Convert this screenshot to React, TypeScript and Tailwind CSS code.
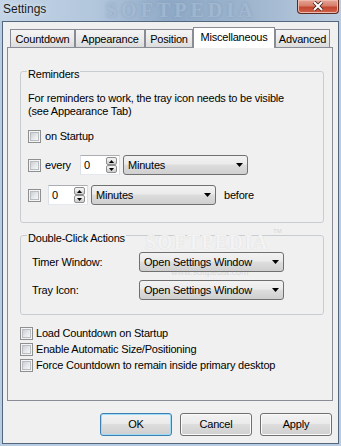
import type { ReactNode } from "react";

const raised =
  "bg-[linear-gradient(to_bottom,#f2f2f2_0%,#ebebeb_45%,#dddddd_50%,#cfcfcf_100%)]";

const Checkbox = () => (
  <span className="flex h-[13px] w-[13px] shrink-0 items-center justify-center border border-[#8e8f8f] bg-[#f4f4f4]">
    <span className="h-[9px] w-[9px] border border-[#b9bdc2] bg-[linear-gradient(135deg,#cbcfd4_0%,#e6e8ea_55%,#f7f7f7_100%)]" />
  </span>
);

const DropArrow = () => (
  <svg width="7" height="4" viewBox="0 0 7 4">
    <path d="M0 0h7L3.5 4z" fill="#000" />
  </svg>
);

const Dropdown = ({ value, className }: { value: string; className: string }) => (
  <div
    className={`flex h-[20px] shrink-0 items-center justify-between rounded-[3px] border border-[#707070] pl-[4px] pr-[4px] ${raised} ${className}`}
  >
    <span>{value}</span>
    <DropArrow />
  </div>
);

const SpinButton = ({ up }: { up?: boolean }) => (
  <span
    className={`flex h-[8px] items-center justify-center rounded-[2px] border border-[#8f8f8f] ${raised}`}
  >
    <svg width="5" height="3" viewBox="0 0 5 3">
      <path d={up ? "M0 3h5L2.5 0z" : "M0 0h5L2.5 3z"} fill="#000" />
    </svg>
  </span>
);

const Spinner = ({ className }: { className: string }) => (
  <div
    className={`flex h-[20px] shrink-0 items-center border border-[#abadb3] border-b-[#e3e9ef] border-x-[#dbdfe6] bg-white pl-[3px] pr-[2px] ${className}`}
  >
    <span className="flex-1">0</span>
    <div className="flex w-[11px] flex-col">
      <SpinButton up />
      <SpinButton />
    </div>
  </div>
);

const GroupBox = ({
  label,
  className,
  children,
}: {
  label: string;
  className: string;
  children: ReactNode;
}) => (
  <div className={`relative w-[304px] shrink-0 rounded-[3px] border border-[#c8cdd2] ${className}`}>
    <span className="absolute left-[6px] top-[-4px] z-10 bg-[#f0f0f0] px-px">{label}</span>
    {children}
  </div>
);

const Tab = ({ label, className, active }: { label: string; className: string; active?: boolean }) =>
  active ? (
    <div
      className={`mb-[-1px] flex h-[21px] shrink-0 items-start justify-center border border-b-0 border-[#898c95] bg-white pt-[3px] ${className}`}
    >
      {label}
    </div>
  ) : (
    <div
      className={`flex h-[18px] shrink-0 items-center justify-center border border-b-0 border-[#898c95] bg-[linear-gradient(to_bottom,#f4f4f4_0%,#ebebeb_50%,#dcdcdc_100%)] pt-px ${className}`}
    >
      {label}
    </div>
  );

const Button = ({ label, primary }: { label: string; primary?: boolean }) => (
  <button
    className={`flex h-[23px] w-[72px] items-center justify-center rounded-[3px] border ${
      primary
        ? "border-[#3c7fb1] shadow-[inset_0_0_0_1px_#9edcfa]"
        : "border-[#707070] shadow-[inset_0_0_0_1px_#fbfbfb]"
    } ${raised}`}
  >
    {label}
  </button>
);

const CheckRow = ({ label }: { label: string }) => (
  <div className="flex h-[16px] items-center">
    <Checkbox />
    <span className="ml-[3px]">{label}</span>
  </div>
);

export default function App() {
  return (
    <div className="flex h-[446px] w-[341px] flex-col overflow-hidden bg-[#b9cde2] font-['Liberation_Sans',Arial,sans-serif] text-[11px] leading-[13px] tracking-[-0.2px] text-black">
      {/* title bar */}
      <div className="relative flex h-[21px] shrink-0 items-start justify-between overflow-hidden bg-[linear-gradient(to_right,#c3d4e6_0%,#b2c6dc_28%,#8fa9c6_50%,#9db4cd_72%,#bccde0_100%)]">
        <span className="pl-[3px] pt-[2px] text-[12px] leading-[14px] tracking-normal text-[#1b1b1b] [text-shadow:0_0_5px_#e8f0f8]">
          Settings
        </span>
        <span className="pointer-events-none absolute left-[106px] top-0 font-['Liberation_Serif',serif] text-[20px] font-bold leading-[20px] tracking-[4px] text-[#a6bbd2] opacity-70 [text-shadow:0_0_3px_#7f99b8]">
          SOFTPEDIA
        </span>
        <div className="relative mr-[2px] flex h-[14px] w-[42px] items-end justify-center rounded-b-[4px] border border-t-0 border-[#5b2b22] bg-[linear-gradient(to_bottom,#e7a595_0%,#d67f6c_45%,#c4472f_55%,#d0604a_100%)] pb-[2px] shadow-[inset_0_0_0_1px_#eeb9ad]">
          <svg width="12" height="10" viewBox="0 0 12 10">
            <path d="M2 1l8 8M10 1L2 9" stroke="#40201a" strokeWidth="3.6" />
            <path d="M2 1l8 8M10 1L2 9" stroke="#fff" strokeWidth="2" />
          </svg>
        </div>
      </div>

      {/* window body */}
      <div className="flex flex-1 flex-col px-[2px] pb-[2px]">
        <div className="flex flex-1 flex-col border border-[#52677d] bg-[#f0f0f0]">
          <div className="ml-[4px] mr-[5px] mt-[5px] flex flex-col">
            <div className="relative z-10 flex h-[20px] items-end pl-[3px]">
              <Tab label="Countdown" className="w-[65px]" />
              <Tab label="Appearance" className="w-[70px]" />
              <Tab label="Position" className="w-[48px]" />
              <Tab label="Miscellaneous" className="w-[82px]" active />
              <Tab label="Advanced" className="w-[55px]" />
            </div>

            <div className="flex h-[354px] flex-col border border-[#898c95] bg-[#f0f0f0] pl-[12px] pt-[23px]">
              <GroupBox label="Reminders" className="h-[152px]">
                <div className="flex flex-col pl-[7px] pt-[20px]">
                  <p>
                    For reminders to work, the tray icon needs to be visible
                    <br />
                    (see Appearance Tab)
                  </p>
                  <div className="mt-[11px] flex h-[15px] items-center">
                    <Checkbox />
                    <span className="ml-[4px]">on Startup</span>
                  </div>
                  <div className="mt-[11px] flex items-center">
                    <div className="flex w-[52px] items-center">
                      <Checkbox />
                      <span className="ml-[4px]">every</span>
                    </div>
                    <Spinner className="w-[40px]" />
                    <Dropdown value="Minutes" className="ml-[3px] w-[125px]" />
                  </div>
                  <div className="mt-[10px] flex items-center">
                    <Checkbox />
                    <Spinner className="ml-[7px] w-[40px]" />
                    <Dropdown value="Minutes" className="ml-[3px] w-[125px]" />
                    <span className="ml-[8px]">before</span>
                  </div>
                </div>
              </GroupBox>

              <GroupBox label="Double-Click Actions" className="mt-[12px] h-[80px]">
                <span className="pointer-events-none absolute left-[124px] top-[-5px] font-['Liberation_Serif',serif] text-[20px] font-bold leading-[22px] tracking-[1px] text-[#f3f3f3] [text-shadow:0_0_1px_#d2d2d2]">
                  SOFTPEDIA
                </span>
                <span className="pointer-events-none absolute left-[252px] top-[-8px] text-[6px] leading-[7px] tracking-normal text-[#d6d6d6]">
                  TM
                </span>
                <span className="pointer-events-none absolute left-[150px] top-[31px] text-[9px] leading-[10px] tracking-normal text-[#dadada]">
                  www.softpedia.com
                </span>
                <div className="relative flex flex-col gap-[8px] pl-[11px] pt-[16px]">
                  <div className="flex items-center">
                    <span className="w-[107px]">Timer Window:</span>
                    <Dropdown value="Open Settings Window" className="w-[145px]" />
                  </div>
                  <div className="flex items-center">
                    <span className="w-[107px]">Tray Icon:</span>
                    <Dropdown value="Open Settings Window" className="w-[145px]" />
                  </div>
                </div>
              </GroupBox>

              <div className="mt-[10px] flex flex-col">
                <CheckRow label="Load Countdown on Startup" />
                <CheckRow label="Enable Automatic Size/Positioning" />
                <CheckRow label="Force Countdown to remain inside primary desktop" />
              </div>
            </div>
          </div>

          <div className="mt-[12px] flex justify-end gap-[8px] pr-[6px]">
            <Button label="OK" primary />
            <Button label="Cancel" />
            <Button label="Apply" />
          </div>
        </div>
      </div>
    </div>
  );
}
